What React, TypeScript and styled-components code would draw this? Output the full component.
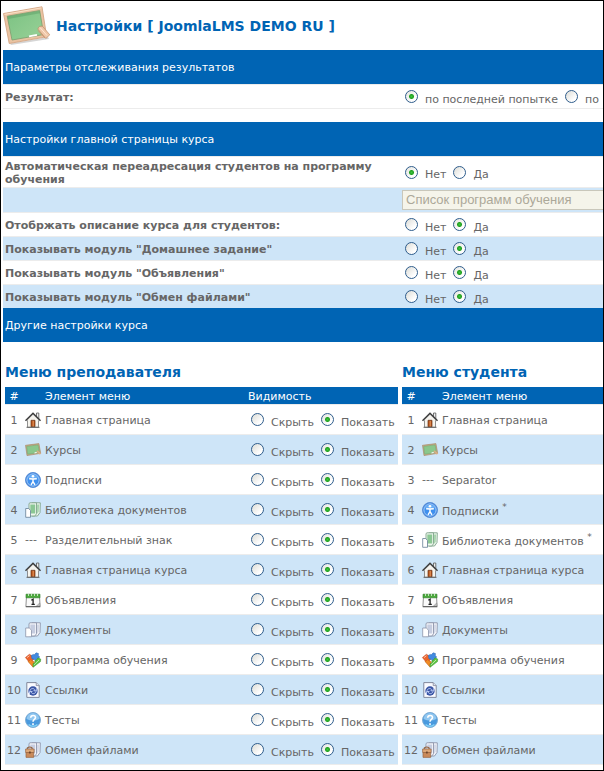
import React, { useId } from 'react';
import styled, { createGlobalStyle } from 'styled-components';

const BLUE = '#0064b4';
const PALE = '#cee5f8';
const LINE = '#ececec';

const GlobalStyle = createGlobalStyle`
  * { box-sizing: border-box; }
  body {
    margin: 0;
    background: #fff;
    color: #666;
    font-family: "DejaVu Sans", Verdana, sans-serif;
    font-size: 11px;
    line-height: 13px;
  }
`;

const Frame = styled.main`
  min-height: 100vh;
  padding: 0 0 5px 2px;
  border: 1px solid #000;
  overflow: hidden;
`;

const PageHeader = styled.header`
  display: flex;
  align-items: center;
  gap: 6px;
  height: 49px;
`;

const PageTitle = styled.h1`
  margin: 0;
  color: ${BLUE};
  font-size: 14px;
  line-height: 18px;
  white-space: nowrap;
`;

const Band = styled.h2`
  margin: 0;
  padding: 11px 2px 10px;
  background: ${BLUE};
  color: #fff;
  font-size: 11px;
  font-weight: 400;
`;

const Settings = styled.section<{ $closed?: boolean }>`
  margin-bottom: ${(p) => (p.$closed ? '13px' : '0')};
  border-bottom: ${(p) => (p.$closed ? `1px solid ${LINE}` : '0')};
`;

const SettingRow = styled.div<{ $shaded?: boolean }>`
  display: grid;
  grid-template-columns: minmax(0, 399fr) minmax(0, 201fr);
  align-items: center;
  min-height: 24px;
  border-top: 1px solid ${LINE};
  background: ${(p) => (p.$shaded ? PALE : '#fff')};
`;

const SettingName = styled.div`
  padding: 3px 2px 1px;
  font-weight: 700;
`;

const SettingValue = styled.div`
  min-width: 0;
  overflow: hidden;
`;

const Choices = styled.div`
  display: flex;
  align-items: center;
  gap: 7px;
  padding-left: 3px;
  white-space: nowrap;
`;

const Choice = styled.label`
  display: flex;
  align-items: center;
  gap: 7px;
`;

const ChoiceText = styled.span`
  padding-top: 5px;
`;

const Radio = styled.input`
  appearance: none;
  flex: none;
  width: 13px;
  height: 13px;
  margin: 0;
  border: 1px solid #2f5d8c;
  border-radius: 50%;
  background: linear-gradient(135deg, #dcdcd6, #fff 75%);
  &:checked {
    background:
      radial-gradient(circle at 50% 50%, #3fc43f 0, #21a121 2px, transparent 3px),
      linear-gradient(135deg, #e4e4de, #fff 75%);
  }
`;

const ProgramSelect = styled.select`
  display: block;
  appearance: none;
  width: 260px;
  height: 20px;
  margin: 2px 0;
  padding: 0 3px;
  border: 1px solid #c9c7ba;
  border-radius: 0;
  background: #f5f4ea;
  color: #aca899;
  opacity: 1;
  font: 13px/16px "Liberation Sans", Arial, sans-serif;
`;

const Menus = styled.div`
  display: grid;
  grid-template-columns: minmax(0, 393fr) minmax(0, 201fr);
  gap: 4px;
  padding: 21px 0 0 2px;
`;

const MenuTitle = styled.h3`
  margin: 0 0 6px;
  color: ${BLUE};
  font-size: 14px;
  line-height: 18px;
  white-space: nowrap;
`;

const MenuTable = styled.table`
  width: 100%;
  table-layout: fixed;
  border-collapse: separate;
  border-spacing: 0;
  border-bottom: 1px solid ${LINE};
`;

const NumberCol = styled.col`width: 18px;`;
const IconCol = styled.col`width: 20px;`;
const VisibilityCol = styled.col`width: 152px;`;

const HeadCell = styled.th<{ $centered?: boolean }>`
  height: 17px;
  padding: 2px ${(p) => (p.$centered ? '0' : '2px')} 0;
  background: ${BLUE};
  color: #fff;
  font-weight: 400;
  text-align: ${(p) => (p.$centered ? 'center' : 'left')};
`;

const MenuRow = styled.tr`
  &:nth-child(even) { background: ${PALE}; }
`;

const Cell = styled.td`
  height: 30px;
  padding: 2px 2px 0;
  border-top: 1px solid ${LINE};
  white-space: nowrap;
  vertical-align: middle;
`;

const NumberCell = styled(Cell)`
  padding: 2px 0 0;
  text-align: center;
`;

const IconCell = styled(Cell)`
  padding: 0 2px;
`;

const ChoiceCell = styled(Cell)`
  padding: 0 0 0 2px;
`;

const Star = styled.sup`
  font-size: 9px;
  line-height: 9px;
`;

const Glyph = styled.svg`
  display: block;
  overflow: visible;
`;

type IconName =
  | 'house' | 'board' | 'person' | 'library' | 'calendar'
  | 'docs' | 'puzzle' | 'link' | 'question' | 'share';

const PaperStack = ({ sheet, edge, fill }: { sheet: string; edge: string; fill: string }) => (
  <>
    <path d="M7 .8h8.300l-.3 9.700-2.500 3.500H7z" fill={sheet} stroke={edge} strokeWidth=".9" />
    <path d="M12.300 2.500h1.500l-.3 7.500-1.200 1.800z" fill={fill} />
    <path d="M4 1.500 5 .8h6.500v11L9.800 14H4z" fill={sheet} stroke={edge} strokeWidth=".9" />
    <path d="M5.300 2.500h4.900v9H5.300z" fill={fill} />
  </>
);

const drawings: Record<IconName, React.ReactNode> = {
  house: (
    <>
      <path d="M11.5 1h2.3v6l-2.3-2z" fill="#eee" stroke="#555" strokeWidth=".8" />
      <path d="M2.5 7.5 8 2.2l5.5 5.3v7.8h-11z" fill="#f6f4ee" stroke="#777" strokeWidth=".8" />
      <path d="M.5 8.8 8 1.2l7.5 7.6" fill="none" stroke="#3c3c3c" strokeWidth="1.5" />
      <path d="M1.6 9.1 8 2.8l6.400 6.300" fill="none" stroke="#ddd" strokeWidth=".5" />
      <path d="M6 8.300h4v6.500H6z" fill="#b9541b" stroke="#633116" strokeWidth=".7" />
      <path d="M8.200 9v5.500" stroke="#e69a63" />
      <path d="M1.5 15.300h13" stroke="#666" />
    </>
  ),
  board: (
    <>
      <path d="m.5 3.300 13.400-1.700 1.800 9.700L2 13.600z" fill="#c8ad88" stroke="#a3835c" strokeWidth=".6" />
      <path d="m1.700 4.400 11.400-1.500 1.300 7.500-11.700 1.800z" fill="#8ac78c" stroke="#629e6d" strokeWidth=".4" />
      <path d="m12 8.800 3.500 3.200" stroke="#d9ad85" strokeWidth="1.800" />
      <path d="m9.500 10.900 2.200-.4" stroke="#fff" />
    </>
  ),
  person: (
    <>
      <circle cx="8" cy="8" r="7.500" fill="#2468cd" stroke="#5b92da" />
      <circle cx="8" cy="8" r="6.200" fill="#3f90ee" stroke="#b9dcff" strokeWidth=".9" />
      <path d="M3 6a5.500 5.500 0 0 1 10 0Q8 8.500 3 6" fill="#8bc5fa" opacity=".6" />
      <circle cx="8" cy="4.300" r="1.300" fill="#fff" />
      <path d="M4.200 6.700 8 7l3.800-.3M8 6.600v3l-2 3.300M8 9.600l2 3.300" fill="none" stroke="#fff" strokeWidth="1.400" />
    </>
  ),
  library: (
    <>
      <PaperStack sheet="#eef7ed" edge="#7fa38a" fill="#8bc794" />
      <path d="M.7 6.500h3l1.800 2v6.800H.7z" fill="#fff" stroke="#657d95" strokeWidth=".8" />
    </>
  ),
  calendar: (
    <>
      <path d="M1.5 4h13l.6 10.500H.9z" fill="#fafafa" stroke="#777" strokeWidth=".8" />
      <path d="M1 2.200h14v3.600H1z" fill="#4baa3c" stroke="#2e7b27" strokeWidth=".6" />
      <path d="M3.500 1v3M6.500 1v3M9.500 1v3M12.500 1v3" stroke="#dff0da" strokeWidth=".8" />
      <path d="m6.300 8.200 1.800-1v5.200M6.500 12.400h3.300" fill="none" stroke="#222" strokeWidth="1.300" />
      <path d="m11.300 14.200 3.400-3.200.2 3.200z" fill="#ccc" stroke="#777" strokeWidth=".5" />
      <path d="M.8 14.800h14.500" stroke="#444" strokeWidth=".8" />
    </>
  ),
  docs: (
    <>
      <PaperStack sheet="#f7f8fc" edge="#8b93a9" fill="#c6cde0" />
      <path d="M.7 6h3.600l2.200 2.200v6.600H.7z" fill="#fff" stroke="#8b93a9" strokeWidth=".8" />
    </>
  ),
  puzzle: (
    <>
      <path d="m.4 5.500 4-3.200 2 1.200.3 2.400 2.100 1-2.600 3.500-2-.2z" fill="#ee642c" stroke="#bd431b" strokeWidth=".5" />
      <path d="m6.300 3.400 2-1 1 .4 1.800-2 2.400.8-.3 2 1.600 1.400-4.400 3.800-1.400-1.600-2-.3z" fill="#438be0" stroke="#2462af" strokeWidth=".5" />
      <path d="m3 9.600 2.700-2.100 1.600 1.600 2 .6-.3 4.500-1.200.7z" fill="#f08b25" stroke="#bd5a18" strokeWidth=".5" />
      <path d="m8.100 15.300-.1-3.600 2.100-1.100-.2-2 1.800-.8 1.200-2 2.800 1.300-.2 2.500z" fill="#5dc63d" stroke="#318b2d" strokeWidth=".5" />
      <path d="m2 5.600 2.500-1.900M8.800 13l5.200-5" stroke="#fff" opacity=".6" />
    </>
  ),
  link: (
    <>
      <path d="M1.800.6h9.400l3 3v11.800H1.800z" fill="#f9faff" stroke="#767d91" strokeWidth=".9" />
      <path d="M11.200.6v3h3" fill="#dce0ed" stroke="#767d91" strokeWidth=".7" />
      <circle cx="8" cy="9" r="4.700" fill="#3a55a5" />
      <path d="M5 8.800c.3-2.500 3.800-3 4.800-1l-1 1h3V6.200M11 9.300c-.5 2.700-3.600 3-4.800 1.200l1.100-1H4.500V12" fill="none" stroke="#b9c9f2" />
    </>
  ),
  question: (
    <>
      <circle cx="8" cy="8" r="7.500" fill="#4a9ade" stroke="#7faed6" />
      <path d="M1.600 7a6.400 6 0 0 1 12.800 0Q8 10 1.600 7" fill="#a9d5f5" opacity=".75" />
      <path d="M3.600 12.500q4.400 3.500 8.800 0" stroke="#85d4f8" strokeWidth="1.400" fill="none" />
      <path d="M5.700 5.800c.1-3.200 4.800-3 4.800-.2C10.500 7.500 8 7.500 8 9.800M8 11.200v1.700" fill="none" stroke="#fff" strokeWidth="1.600" />
    </>
  ),
  share: (
    <>
      <PaperStack sheet="#f7f8fc" edge="#8b93a9" fill="#c6cde0" />
      <path d="M2.300 7.500V6q2.400-2 4.800 0v1.500" fill="none" stroke="#90613f" strokeWidth="1.100" />
      <path d="M.6 7h8.500v3.500H.6z" fill="#dda878" stroke="#9a6640" strokeWidth=".7" />
      <path d="M1 10.500h7.700v4.900H1z" fill="#c98a5a" stroke="#9a6640" strokeWidth=".7" />
      <path d="M4.200 9.500h1.400v2H4.200z" fill="#5c3823" />
    </>
  ),
};

const Icon = ({ name }: { name: IconName }) => (
  <Glyph width="16" height="16" viewBox="0 0 16 16" aria-hidden="true">
    {drawings[name]}
  </Glyph>
);

const BoardLogo = () => (
  <Glyph width="47" height="40" viewBox="0 0 47 40" aria-hidden="true">
    <defs>
      <linearGradient id="slate" x1="0" y1="0" x2="1" y2="1">
        <stop offset="0" stopColor="#7cc283" />
        <stop offset="1" stopColor="#98d197" />
      </linearGradient>
    </defs>
    <path d="M7 37.500 45 31l1 2-38 6z" fill="#999" opacity=".4" />
    <path d="M.5 7.500 39 .8l4.700 30L6.200 37.500z" fill="#eac3a2" stroke="#cf9f7c" strokeWidth=".8" />
    <path d="m1.500 8.400 37-6.500" stroke="#fae0c8" />
    <path d="m4.200 10.200 32.500-5.700 4 24-31.700 5.500z" fill="url(#slate)" stroke="#7b9d6f" strokeWidth=".8" />
    <path d="m4.600 10.600 32-5.600.4 2.200-32 5.700z" fill="#4d8d55" opacity=".35" />
    <path d="m26 30.300 8-1.500" stroke="#fff" strokeWidth="1.800" />
    <path d="M34.800 23q1.200-3.500 4.700-2.700l7.300 8.500-4 3.700z" fill="#efc7a8" stroke="#c08c69" strokeWidth=".7" />
    <path d="m35 24.500 7 7.500" stroke="#cf9a75" />
    <path d="m37 21.500 7 8" stroke="#ffe6d2" />
  </Glyph>
);

const RadioPair = ({ options, selected }: { options: string[]; selected: number }) => {
  const group = useId();
  return (
    <Choices role="radiogroup">
      {options.map((text, i) => (
        <Choice key={text}>
          <Radio type="radio" name={group} defaultChecked={i === selected} />
          <ChoiceText>{text}</ChoiceText>
        </Choice>
      ))}
    </Choices>
  );
};

const YES_NO = ['Нет', 'Да'];

const modules = [
  'Отобржать описание курса для студентов:',
  'Показывать модуль "Домашнее задание"',
  'Показывать модуль "Объявления"',
  'Показывать модуль "Обмен файлами"',
];

interface MenuItem { label: string; icon?: IconName; starred?: boolean }

const commonItems: MenuItem[] = [
  { label: 'Главная страница курса', icon: 'house' },
  { label: 'Объявления', icon: 'calendar' },
  { label: 'Документы', icon: 'docs' },
  { label: 'Программа обучения', icon: 'puzzle' },
  { label: 'Ссылки', icon: 'link' },
  { label: 'Тесты', icon: 'question' },
  { label: 'Обмен файлами', icon: 'share' },
];

const teacherItems: MenuItem[] = [
  { label: 'Главная страница', icon: 'house' },
  { label: 'Курсы', icon: 'board' },
  { label: 'Подписки', icon: 'person' },
  { label: 'Библиотека документов', icon: 'library' },
  { label: 'Разделительный знак' },
  ...commonItems,
];

const studentItems: MenuItem[] = [
  { label: 'Главная страница', icon: 'house' },
  { label: 'Курсы', icon: 'board' },
  { label: 'Separator' },
  { label: 'Подписки', icon: 'person', starred: true },
  { label: 'Библиотека документов', icon: 'library', starred: true },
  ...commonItems,
];

const Menu = ({ title, items, visibility }: { title: string; items: MenuItem[]; visibility?: boolean }) => {
  const titleId = useId();
  return (
    <section>
      <MenuTitle id={titleId}>{title}</MenuTitle>
      <MenuTable aria-labelledby={titleId}>
        <colgroup>
          <NumberCol />
          <IconCol />
          <col />
          {visibility && <VisibilityCol />}
        </colgroup>
        <thead>
          <tr>
            <HeadCell $centered>#</HeadCell>
            <HeadCell />
            <HeadCell>Элемент меню</HeadCell>
            {visibility && <HeadCell>Видимость</HeadCell>}
          </tr>
        </thead>
        <tbody>
          {items.map((item, i) => (
            <MenuRow key={item.label}>
              <NumberCell>{i + 1}</NumberCell>
              <IconCell>{item.icon ? <Icon name={item.icon} /> : '---'}</IconCell>
              <Cell>
                {item.label}
                {item.starred && <> <Star>*</Star></>}
              </Cell>
              {visibility && (
                <ChoiceCell>
                  <RadioPair options={['Скрыть', 'Показать']} selected={1} />
                </ChoiceCell>
              )}
            </MenuRow>
          ))}
        </tbody>
      </MenuTable>
    </section>
  );
};

export default function App() {
  return (
    <>
      <GlobalStyle />
      <Frame>
        <PageHeader>
          <BoardLogo />
          <PageTitle>Настройки [ JoomlaLMS DEMO RU ]</PageTitle>
        </PageHeader>

        <Settings $closed>
          <Band>Параметры отслеживания результатов</Band>
          <SettingRow>
            <SettingName>Результат:</SettingName>
            <SettingValue>
              <RadioPair options={['по последней попытке', 'по']} selected={0} />
            </SettingValue>
          </SettingRow>
        </Settings>

        <Settings>
          <Band>Настройки главной страницы курса</Band>
          <SettingRow>
            <SettingName>Автоматическая переадресация студентов на программу обучения</SettingName>
            <SettingValue>
              <RadioPair options={YES_NO} selected={0} />
            </SettingValue>
          </SettingRow>
          <SettingRow $shaded>
            <SettingName />
            <SettingValue>
              <ProgramSelect disabled aria-label="Список программ обучения">
                <option>Список программ обучения</option>
              </ProgramSelect>
            </SettingValue>
          </SettingRow>
          {modules.map((name, i) => (
            <SettingRow key={name} $shaded={i % 2 === 1}>
              <SettingName>{name}</SettingName>
              <SettingValue>
                <RadioPair options={YES_NO} selected={1} />
              </SettingValue>
            </SettingRow>
          ))}
        </Settings>

        <Band>Другие настройки курса</Band>
        <Menus>
          <Menu title="Меню преподавателя" items={teacherItems} visibility />
          <Menu title="Меню студента" items={studentItems} />
        </Menus>
      </Frame>
    </>
  );
}
